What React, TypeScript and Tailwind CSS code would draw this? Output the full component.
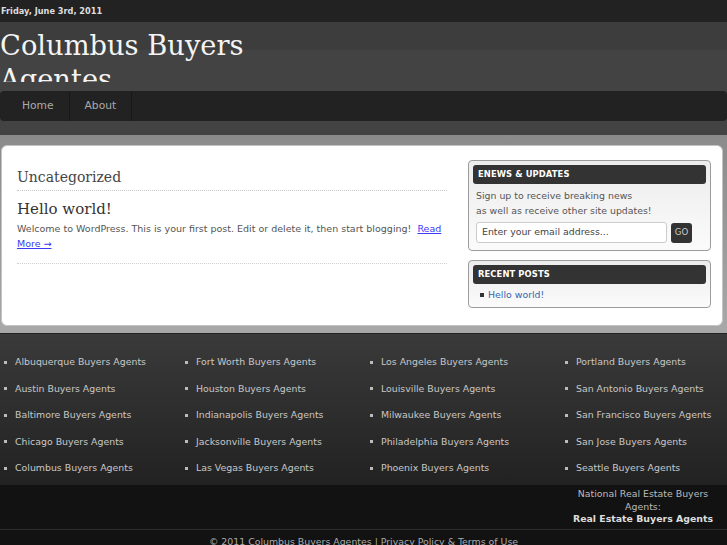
import React from "react";

const cities: string[][] = [
    ["Albuquerque", "Austin", "Baltimore", "Chicago", "Columbus"],
    ["Fort Worth", "Houston", "Indianapolis", "Jacksonville", "Las Vegas"],
    ["Los Angeles", "Louisville", "Milwaukee", "Philadelphia", "Phoenix"],
    ["Portland", "San Antonio", "San Francisco", "San Jose", "Seattle"],
];

const colWidths = ["w-[181px]", "w-[185px]", "w-[195px]", "flex-1"];

function SideBox({ title, children }: { title: string; children: React.ReactNode }) {
    return (
        <div className="border border-[#9c9c9c] rounded-[4px] bg-linear-to-b from-[#ececec] to-[#fbfbfb] p-[4px]">
            <div className="h-[19px] bg-[#333] rounded-[3px] flex items-center pl-[5px] text-[8.4px] font-bold text-white tracking-[0.1px]">
                {title}
            </div>
            {children}
        </div>
    );
}

export default function App() {
    return (
        <div className="w-[727px] h-[545px] overflow-hidden bg-[#121212] font-['DejaVu_Sans',sans-serif]">
            {/* date bar */}
            <div className="h-[22px] bg-[#222] flex items-center pl-[1px] text-[8.2px] font-bold text-[#ddd]">
                Friday, June 3rd, 2011
            </div>

            {/* header */}
            <div className="h-[69px] bg-linear-to-b from-[#3d3d3d] from-40% to-[#434343] to-40% pt-[7px]">
                <h1 className="w-[265px] h-[53px] overflow-hidden font-['DejaVu_Serif',serif] text-[27.3px] leading-[34px] text-[#f4f4f4]">
                    Columbus Buyers Agentes
                </h1>
            </div>

            {/* nav */}
            <div className="bg-[#434343]">
                <div className="h-[30px] bg-[#222] rounded-[4px] flex pl-[7px] pt-[1px] text-[10.7px] text-[#aaa]">
                    <div className="px-[15px] flex items-center border-r border-[#181818]">Home</div>
                    <div className="px-[15px] flex items-center border-r border-[#181818]">About</div>
                </div>
                <div className="h-[14px]" />
            </div>

            {/* content */}
            <div className="bg-linear-to-b from-[#8b8b8b] to-[#a8a8a8] pt-[10px] pb-[7px] pl-[1px] pr-[4px]">
                <div className="h-[181px] bg-white border border-[#c4c4c4] rounded-[6px] flex">
                    <div className="w-[430px] ml-[15px] pt-[22px]">
                        <div className="pb-[4px] border-b border-dotted border-[#c8c8c8] font-['DejaVu_Serif',serif] text-[14px] leading-[18px] text-[#444]">
                            Uncategorized
                        </div>
                        <div className="pt-[9px] pb-[12px] border-b border-dotted border-[#d0d0d0]">
                            <h2 className="font-['DejaVu_Serif',serif] text-[15px] leading-[19px] text-[#333]">Hello world!</h2>
                            <p className="mt-[2px] text-[9.5px] leading-[15px] text-[#555]">
                                Welcome to WordPress. This is your first post. Edit or delete it, then start blogging!&nbsp;{" "}
                                <a href="#" className="text-[#3b3bf5] underline">Read More →</a>
                            </p>
                        </div>
                    </div>

                    <div className="w-[243px] ml-[21px] pt-[14px] flex flex-col gap-[9px]">
                        <SideBox title="ENEWS & UPDATES">
                            <p className="pt-[4px] pl-[3px] text-[9.4px] leading-[15px] text-[#555]">
                                Sign up to receive breaking news
                                <br />
                                as well as receive other site updates!
                            </p>
                            <div className="flex items-center gap-[4px] pl-[3px] mt-[4px] mb-[3px]">
                                <div className="w-[191px] h-[21px] bg-white border border-[#ccc] rounded-[3px] flex items-center pl-[5px] text-[9.4px] text-[#444]">
                                    Enter your email address...
                                </div>
                                <div className="w-[21px] h-[20px] bg-[#333] rounded-[3px] flex items-center justify-center text-[8.6px] text-[#ccc]">
                                    GO
                                </div>
                            </div>
                        </SideBox>
                        <SideBox title="RECENT POSTS">
                            <div className="flex items-center pl-[7px] pt-[3px] pb-[1px] text-[9.4px] leading-[15px]">
                                <span className="w-[4px] h-[4px] bg-[#333] mr-[4px]" />
                                <a href="#" className="text-[#3565b0]">Hello world!</a>
                            </div>
                        </SideBox>
                    </div>
                </div>
            </div>

            {/* footer widgets */}
            <div className="h-[1px] bg-[#232323]" />
            <div className="h-[151px] bg-linear-to-b from-[#3a3a3a] to-[#222] pt-[15px] flex">
                {cities.map((col, i) => (
                    <ul key={i} className={colWidths[i]}>
                        {col.map((c) => (
                            <li key={c} className="h-[26.5px] flex items-center pl-[4px] text-[9.4px] text-[#c8c8c8]">
                                <span className="w-[3px] h-[3px] bg-[#bbb] mr-[8px]" />
                                {c} Buyers Agents
                            </li>
                        ))}
                    </ul>
                ))}
            </div>

            {/* footer */}
            <div className="h-[44px] bg-[#121212] flex justify-end pr-[9px] pt-[3px]">
                <div className="w-[150px] text-center text-[9.4px] leading-[12.5px] text-[#bbb]">
                    National Real Estate Buyers Agents:
                    <div className="font-bold text-[#ddd]">Real Estate Buyers Agents</div>
                </div>
            </div>
            <div className="border-t border-[#2c2c2c] pt-[5px] text-center text-[9.4px] leading-[14px] text-[#aaa]">
                © 2011 Columbus Buyers Agentes | Privacy Policy &amp; Terms of Use
            </div>
        </div>
    );
}
